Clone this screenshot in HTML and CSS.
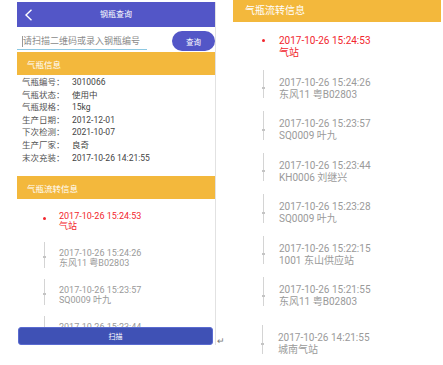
FILE: index.html
```html
<!DOCTYPE html>
<html lang="zh">
<head>
<meta charset="utf-8">
<title>钢瓶查询</title>
<link rel="stylesheet" href="styles.css">
</head>
<body>
<div class="page">
  <div class="left">
    <div class="phone">
      <div class="topbar">
        <div class="back">
          <svg width="9" height="12" viewBox="0 0 9 12"><path d="M7.5 0.8 L2 6 L7.5 11.2" fill="none" stroke="#fff" stroke-width="1.4"/></svg>
        </div>
        <div class="title">钢瓶查询</div>
        <div class="spacer"></div>
      </div>
      <div class="search">
        <div class="field"><span class="caret"></span><span class="ph">请扫描二维码或录入钢瓶编号</span></div>
        <div class="btn-query">查询</div>
      </div>
      <div class="sec">气瓶信息</div>
      <div class="info">
        <div class="row"><span class="lbl">气瓶编号：</span><span>3010066</span></div>
        <div class="row"><span class="lbl">气瓶状态：</span><span>使用中</span></div>
        <div class="row"><span class="lbl">气瓶规格：</span><span>15kg</span></div>
        <div class="row"><span class="lbl">生产日期：</span><span>2012-12-01</span></div>
        <div class="row"><span class="lbl">下次检测：</span><span>2021-10-07</span></div>
        <div class="row"><span class="lbl">生产厂家：</span><span>良奇</span></div>
        <div class="row"><span class="lbl">末次充装：</span><span>2017-10-26 14:21:55</span></div>
      </div>
      <div class="sec">气瓶流转信息</div>
      <div class="tl tl-s">
        <div class="it first"><div class="rail"><span class="rdot"></span></div><div class="txt"><div>2017-10-26 15:24:53</div><div>气站</div></div></div>
        <div class="it"><div class="rail"><span class="seg"></span><span class="gdot"></span><span class="segb"></span></div><div class="txt"><div>2017-10-26 15:24:26</div><div>东风11 粤B02803</div></div></div>
        <div class="it"><div class="rail"><span class="seg"></span><span class="gdot"></span><span class="segb"></span></div><div class="txt"><div>2017-10-26 15:23:57</div><div>SQ0009 叶九</div></div></div>
        <div class="it"><div class="rail"><span class="seg"></span><span class="gdot"></span><span class="segb"></span></div><div class="txt"><div>2017-10-26 15:23:44</div><div>KH0006 刘继兴</div></div></div>
      </div>
      <div class="btn-scan">扫描</div>
    </div>
    <div class="ret">↵</div>
  </div>
  <div class="right">
    <div class="sec sec-r">气瓶流转信息</div>
    <div class="tl tl-l">
      <div class="it first"><div class="rail"><span class="rdot"></span></div><div class="txt"><div>2017-10-26 15:24:53</div><div>气站</div></div></div>
      <div class="it"><div class="rail"><span class="seg"></span><span class="gdot"></span><span class="segb"></span></div><div class="txt"><div>2017-10-26 15:24:26</div><div>东风11 粤B02803</div></div></div>
      <div class="it"><div class="rail"><span class="seg"></span><span class="gdot"></span><span class="segb"></span></div><div class="txt"><div>2017-10-26 15:23:57</div><div>SQ0009 叶九</div></div></div>
      <div class="it"><div class="rail"><span class="seg"></span><span class="gdot"></span><span class="segb"></span></div><div class="txt"><div>2017-10-26 15:23:44</div><div>KH0006 刘继兴</div></div></div>
      <div class="it"><div class="rail"><span class="seg"></span><span class="gdot"></span><span class="segb"></span></div><div class="txt"><div>2017-10-26 15:23:28</div><div>SQ0009 叶九</div></div></div>
      <div class="it"><div class="rail"><span class="seg"></span><span class="gdot"></span><span class="segb"></span></div><div class="txt"><div>2017-10-26 15:22:15</div><div>1001 东山供应站</div></div></div>
      <div class="it"><div class="rail"><span class="seg"></span><span class="gdot"></span><span class="segb"></span></div><div class="txt"><div>2017-10-26 15:21:55</div><div>东风11 粤B02803</div></div></div>
      <div class="it last"><div class="rail"><span class="seg"></span><span class="gdot"></span><span class="segb"></span></div><div class="txt"><div>2017-10-26 14:21:55</div><div>城南气站</div></div></div>
    </div>
  </div>
</div>
</body>
</html>
```
FILE: styles.css
```css
* { box-sizing: border-box; margin: 0; padding: 0; }
html, body { width: 443px; height: 365px; overflow: hidden; background: #fff; }
body { font-family: "Roboto", "Noto Sans CJK SC", sans-serif; color: #444; }
.page { display: flex; align-items: flex-start; }
.left { display: flex; align-items: flex-end; margin-left: 17px; }
.phone {
  width: 199px; height: 343px; margin-top: 2px;
  border-right: 1px solid #e2e2e2;
  display: flex; flex-direction: column; overflow: hidden; background: #fff;
}
.topbar { height: 25px; background: #5356c7; display: flex; align-items: center; flex-shrink: 0; }
.back { width: 30px; padding-left: 7px; display: flex; align-items: center; padding-top: 1px; }
.title { flex: 1; text-align: center; color: #fff; font-size: 8px; line-height: 10px; }
.spacer { width: 30px; }
.search { height: 25px; display: flex; flex-shrink: 0; }
.field {
  width: 130px; margin-bottom: 2px; border-bottom: 1px solid #8cc8e2;
  display: flex; align-items: center; padding-top: 6px; padding-left: 5px;
}
.caret { width: 1px; height: 11px; background: #999; margin-right: 0; }
.ph { font-size: 9px; color: #8a8a8a; line-height: 11px; }
.btn-query {
  margin-left: auto; align-self: flex-end; margin-bottom: 1px;
  width: 43px; height: 20px; border-radius: 10px; background: #5356c7;
  color: #fff; font-size: 7.5px; display: flex; align-items: center; justify-content: center;
}
.sec {
  height: 23px; background: #f3b83c; color: #fff; font-size: 8.5px;
  display: flex; align-items: center; padding-left: 10px; flex-shrink: 0;
}
.info { padding: 1px 0 12px 5px; font-size: 8.5px; line-height: 12.6px; color: #444; flex-shrink: 0; }
.lbl { display: inline-block; width: 50px; color: #555; }
.tl { display: flex; flex-direction: column; }
.tl-s { flex: 1; overflow: hidden; padding-top: 6px; padding-left: 27px; font-size: 9px; line-height: 10px; color: #9a9a9a; }
.it { display: flex; flex-shrink: 0; }
.rail { width: 1px; display: flex; flex-direction: column; align-items: center; }
.seg { flex: 1; width: 1px; background: #d4d4d4; }
.segb { width: 1px; background: #d4d4d4; }
.gdot { width: 3px; height: 2px; background: #c4c4c4; }
.rdot { width: 3px; height: 3px; border-radius: 50%; background: #f2262d; margin: auto 0; }
.first .rail { justify-content: center; }
.first .txt { color: #f2262d; }
.tl-s .txt { margin-top: 6px; margin-left: 14px; white-space: nowrap; }
.tl-s .it + .it { margin-top: 11px; }
.tl-s .segb { height: 10px; }
.btn-scan {
  flex-shrink: 0; height: 18px; margin: 0 2px 0 1px; border-radius: 3px;
  background: #3f51b5; border: 1px solid #5a6bd0;
  color: #fff; font-size: 7px; display: flex; align-items: center; justify-content: center;
}
.ret { font-size: 9px; line-height: 9px; color: #777; margin-left: 1px; margin-bottom: -1px; width: 9px; }
.right { width: 208px; margin-left: 7px; display: flex; flex-direction: column; }
.sec-r { height: 22px; font-size: 10px; padding-left: 12px; padding-bottom: 4px; }
.tl-l { padding-top: 6px; padding-left: 30px; font-size: 10px; line-height: 12px; color: #9a9a9a; }
.tl-l .txt { margin-top: 7px; margin-left: 15px; white-space: nowrap; }
.tl-l .it { height: 31px; }
.tl-l .it + .it { margin-top: 10.5px; }
.tl-l .rail { padding-bottom: 2.5px; }
.tl-l .segb { height: 9px; }
.tl-l .it.last { margin-top: 17px; margin-left: -1px; }
.tl-l .rdot { margin-top: 11px; }
```
